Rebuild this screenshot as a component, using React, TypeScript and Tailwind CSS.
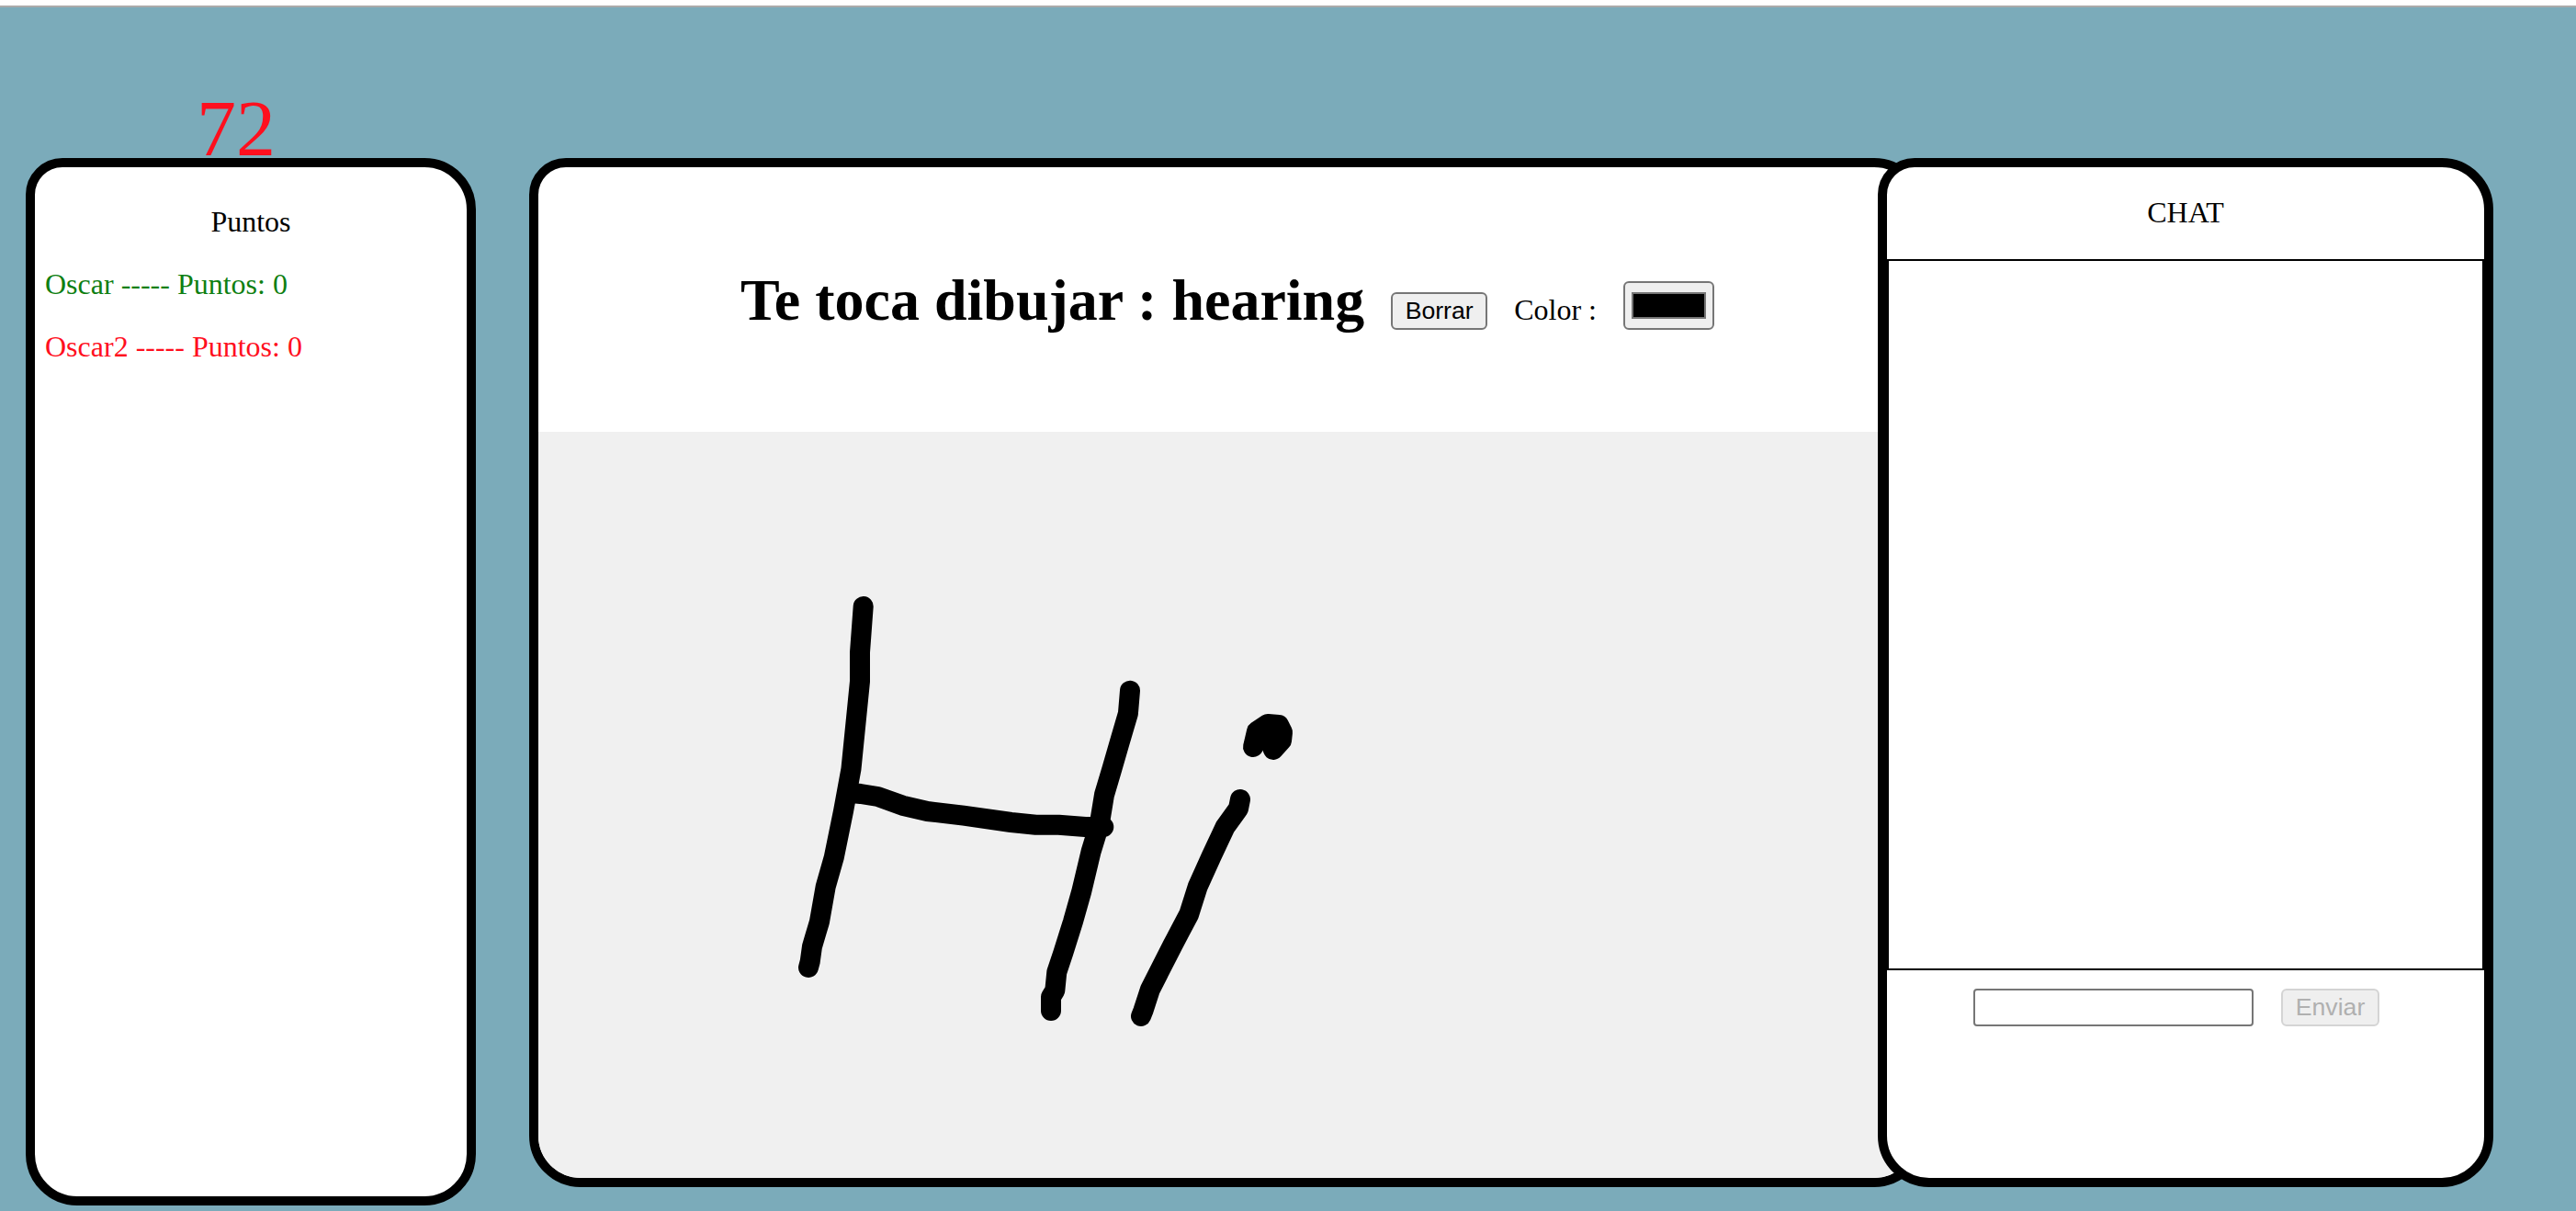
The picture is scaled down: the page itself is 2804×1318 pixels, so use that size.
const strokes = [
  "939.7,660 936,710 936,741.7 926.5,836.7 918,883 907.8,933 898.7,965 892,1003 884,1030 881.7,1046.7 880,1053",
  "926.5,863 936.8,864 955.5,867 982.4,876.7 1009.4,883 1048.8,887.7 1100.6,895 1127.5,897.7 1152.4,897.7 1181.4,900 1201.3,900",
  "1230,751.7 1227.9,776.7 1218.7,808 1210.4,836.7 1202,865 1196.8,896.7 1187.6,926.7 1177.3,970 1168,1003 1157.4,1036.7 1150.3,1058 1148.3,1078 1144,1085 1144,1100",
  "1350,870 1348,880 1343,887 1333.6,900 1318.7,931.7 1303.7,965 1294.2,995 1276.8,1028 1252,1076.7 1244.4,1100 1242,1106",
  "1364,813 1368,796 1380,788 1392,789 1396,797 1395,806 1386,816 1380,802 1390,800",
];

// Lienzo de dibujo
function Canvas() {
  return (
    <div className="h-[812px] bg-[#f0f0f0]">
      <svg viewBox="586 470 1500 812" className="block h-full w-full">
        {strokes.map((points) => (
          <polyline
            key={points}
            points={points}
            fill="none"
            stroke="#000"
            strokeWidth={22}
            strokeLinecap="round"
            strokeLinejoin="round"
          />
        ))}
      </svg>
    </div>
  );
}

export default function App() {
  return (
    <div className="flex h-[1318px] flex-col overflow-hidden font-['Liberation_Serif',serif] text-[32px] text-black">
      <div className="h-[6px] bg-white" />
      <div className="h-[2px] bg-[#aaaaaa]" />
      <div className="flex flex-1 items-start bg-[#7babba] pl-[28px] pt-[164px]">
        {/* Puntos */}
        <div className="-mt-[70px] w-[490px] shrink-0">
          <div className="h-[70px] pl-[186px] text-[86px] leading-[76px] text-[#ff0f1e]">72</div>
          <div className="h-[1140px] rounded-[56px] rounded-tl-[40px] border-[10px] border-black bg-white">
            <div className="pt-[39px] text-center leading-[40px]">Puntos</div>
            <div className="mt-[28px] px-[11px] leading-[40px] text-[#0f7f12]">Oscar ----- Puntos: 0</div>
            <div className="mt-[28px] px-[11px] leading-[40px] text-[#ff0f1e]">Oscar2 ----- Puntos: 0</div>
          </div>
        </div>

        {/* Dibujo */}
        <div className="ml-[58px] h-[1120px] w-[1520px] shrink-0 overflow-hidden rounded-[56px] rounded-tl-[40px] border-[10px] border-black bg-white">
          <div className="flex h-[288px] items-end pb-[111px] pl-[220px]">
            <h1 className="text-[64px] font-bold leading-[64px]">Te toca dibujar : hearing</h1>
            <button className="ml-[29px] h-[41px] w-[105px] rounded-[6px] border-2 border-[#767676] bg-[#efefef] font-['Liberation_Sans',sans-serif] text-[26.67px] leading-none">
              Borrar
            </button>
            <span className="ml-[29px] leading-[44px]">Color :</span>
            <button className="ml-[29px] flex h-[53px] w-[99px] items-start justify-center rounded-[6px] border-2 border-[#767676] bg-[#efefef] pt-[10px]">
              <span className="block h-[29px] w-[81px] border-2 border-[#767676] bg-black" />
            </button>
          </div>
          <Canvas />
        </div>

        {/* Chat */}
        <div className="relative z-10 -ml-[52px] flex h-[1120px] w-[670px] shrink-0 flex-col rounded-[56px] rounded-tl-[40px] border-[10px] border-black bg-white">
          <div className="h-[100px] pt-[29px] text-center leading-[40px]">CHAT</div>
          <div className="h-[774px] border-2 border-black" />
          <div className="flex justify-center gap-[30px] pr-[20px] pt-[20px]">
            <input className="h-[41px] w-[305px] rounded-[4px] border-2 border-[#767676] bg-white" />
            <button
              disabled
              className="h-[41px] w-[107px] rounded-[6px] border-2 border-[#d4d4d4] bg-[#efefef] font-['Liberation_Sans',sans-serif] text-[26.67px] leading-none text-[#b0b0b0]"
            >
              Enviar
            </button>
          </div>
        </div>
      </div>
    </div>
  );
}
